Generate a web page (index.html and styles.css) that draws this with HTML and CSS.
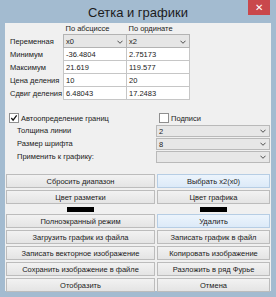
FILE: index.html
```html
<!DOCTYPE html>
<html>
<head>
    <title>Сетка и графики</title>
    <link rel="stylesheet" href="styles.css">
</head>
<body>
<div class="window">
    <div class="titlebar">
        <span></span>
        <span class="title">Сетка и графики</span>
        <span class="close">✕</span>
    </div>
    <div class="client">
        <table class="axes">
            <tr class="head">
                <td></td>
                <td>По абсциссе</td>
                <td>По ординате</td>
            </tr>
            <tr>
                <td class="label">Переменная</td>
                <td class="combo"><span>x0</span><svg class="chev" viewBox="0 0 7 4"><path d="M0.5 0.5 L3.5 3.5 L6.5 0.5"/></svg></td>
                <td class="combo"><span>x2</span><svg class="chev" viewBox="0 0 7 4"><path d="M0.5 0.5 L3.5 3.5 L6.5 0.5"/></svg></td>
            </tr>
            <tr>
                <td class="label">Минимум</td>
                <td class="field">-36.4804</td>
                <td class="field">2.75173</td>
            </tr>
            <tr>
                <td class="label">Максимум</td>
                <td class="field">21.619</td>
                <td class="field">119.577</td>
            </tr>
            <tr>
                <td class="label">Цена деления</td>
                <td class="field">10</td>
                <td class="field">20</td>
            </tr>
            <tr>
                <td class="label">Сдвиг деления</td>
                <td class="field">6.48043</td>
                <td class="field">17.2483</td>
            </tr>
        </table>

        <div class="options">
            <label class="check">
                <span class="box"><svg viewBox="0 0 9 9"><path d="M1.5 4.5 L3.5 7 L7.5 1.5"/></svg></span>
                Автоопределение границ
            </label>
            <label class="check right">
                <span class="box"></span>
                Подписи
            </label>

            <div class="opt-label">Толщина линии</div>
            <div class="select"><span>2</span><svg class="chev" viewBox="0 0 7 4"><path d="M0.5 0.5 L3.5 3.5 L6.5 0.5"/></svg></div>

            <div class="opt-label">Размер шрифта</div>
            <div class="select"><span>8</span><svg class="chev" viewBox="0 0 7 4"><path d="M0.5 0.5 L3.5 3.5 L6.5 0.5"/></svg></div>

            <div class="opt-label">Применить к графику:</div>
            <div class="select"><span></span><svg class="chev" viewBox="0 0 7 4"><path d="M0.5 0.5 L3.5 3.5 L6.5 0.5"/></svg></div>
        </div>

        <div class="buttons">
            <button>Сбросить диапазон</button>
            <button class="hot">Выбрать x2(x0)</button>
            <button>Цвет разметки</button>
            <button>Цвет графика</button>
            <div class="swatch"><span></span></div>
            <div class="swatch"><span></span></div>
            <button>Полноэкранный режим</button>
            <button class="hot">Удалить</button>
            <button>Загрузить график из файла</button>
            <button>Записать график в файл</button>
            <button>Записать векторное изображение</button>
            <button>Копировать изображение</button>
            <button>Сохранить изображение в файле</button>
            <button>Разложить в ряд Фурье</button>
            <button>Отобразить</button>
            <button>Отмена</button>
        </div>
    </div>
</div>
</body>
</html>
```

FILE: styles.css
```css
body {
    margin: 0;
    font-family: "Liberation Sans", Arial, sans-serif;
    font-size: 7.5px;
    color: #1a1a1a;
}
.window {
    width: 276px;
    height: 297px;
    background-color: #a3bbd0;
    overflow: hidden;
}
.titlebar {
    height: 22px;
    display: grid;
    grid-template-columns: 1fr auto 1fr;
    align-items: start;
}
.title {
    font-size: 13px;
    line-height: 26px;
    color: #1c1c1c;
}
.close {
    justify-self: end;
    width: 22px;
    height: 15px;
    margin-right: 6px;
    background-color: #c9484c;
    color: #fff;
    font-size: 10px;
    line-height: 15px;
    text-align: center;
}
.client {
    margin: 1px 5px 0;
    height: 268px;
    background-color: #f0f0f0;
    padding-top: 1px;
    box-sizing: border-box;
}

/* axes table */
.axes {
    border-collapse: collapse;
    margin-left: 0;
}
.axes td {
    padding: 0 0 0 2px;
    height: 12px;
    line-height: 11px;
    white-space: nowrap;
}
.axes .head td {
    height: 10px;
    line-height: 10px;
}
.axes td:first-child {
    width: 53px;
    padding-left: 5px;
}
.axes .field,
.axes .combo {
    width: 60px;
    border: 1px solid #c6c6c6;
}
.axes .field {
    background-color: #fff;
}
.axes .combo {
    background-color: #e6e6e6;
    border-color: #b3b3b3;
}
.combo, .select {
    position: relative;
}
.chev {
    width: 6px;
    height: 4px;
    fill: none;
    stroke: #444;
    stroke-width: 1.1;
}
.axes .combo .chev {
    float: right;
    margin: 4px 3px 0 0;
}

/* options */
.options {
    margin-top: 12px;
    display: grid;
    grid-template-columns: 151px 114px;
    grid-template-rows: 12px 13px 13px 13px;
    align-items: center;
}
.check {
    display: flex;
    align-items: center;
    gap: 2px;
    padding-left: 4px;
}
.check.right {
    padding-left: 3px;
}
.box {
    width: 8px;
    height: 8px;
    border: 1px solid #8f8f8f;
    background-color: #fff;
    display: flex;
}
.box svg {
    width: 8px;
    height: 8px;
    fill: none;
    stroke: #111;
    stroke-width: 1.4;
}
.opt-label {
    padding-left: 12px;
}
.select {
    height: 12px;
    border: 1px solid #b9b9b9;
    background-color: #e7e7e7;
    box-sizing: border-box;
    display: flex;
    align-items: center;
    justify-content: space-between;
    padding: 0 3px 0 2px;
    margin-top: 1px;
}

/* buttons */
.buttons {
    margin-top: 11px;
    padding: 0 1px;
    display: grid;
    grid-template-columns: 149px 113px;
    grid-template-rows: 14px 14px 6px 14px 14px 14px 14px 14px;
    gap: 2px;
}
.buttons button {
    font-family: inherit;
    font-size: 7.5px;
    color: #1a1a1a;
    padding: 0;
    border: 1px solid #bcbcbc;
    background: linear-gradient(#f2f2f2, #e4e4e4);
    border-radius: 0;
}
.buttons button.hot {
    background: linear-gradient(#ecf4fc, #dceaf8);
    border-color: #b6cde4;
}
.swatch {
    display: flex;
    justify-content: center;
    align-items: center;
}
.swatch span {
    width: 27px;
    height: 5px;
    background-color: #000;
}
```
